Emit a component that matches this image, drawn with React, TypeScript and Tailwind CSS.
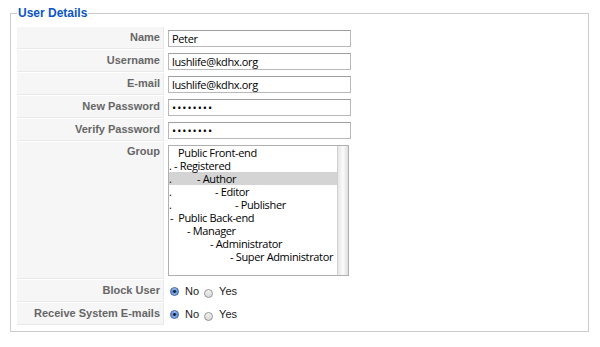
import React from 'react';

const groups = [
  { dot: 0, pad: 9, text: 'Public Front-end' },
  { dot: 5, pad: 0, text: '- Registered' },
  { dot: 28, pad: 0, text: '- Author', selected: true },
  { dot: 46, pad: 0, text: '- Editor' },
  { dot: 66, pad: 0, text: '- Publisher' },
  { dot: 0, pad: 1, text: '-  Public Back-end' },
  { dot: 0, pad: 18, text: '- Manager' },
  { dot: 0, pad: 41, text: '- Administrator' },
  { dot: 0, pad: 61, text: '- Super Administrator' },
];

function Radio({ checked }: { checked?: boolean }) {
  if (checked) {
    return (
      <svg width="9" height="9" viewBox="0 0 9 9" className="shrink-0">
        <defs>
          <linearGradient id="rb" x1="0" y1="0" x2="0" y2="1">
            <stop offset="0" stopColor="#a9c6ee" />
            <stop offset="0.5" stopColor="#5b8fd8" />
            <stop offset="1" stopColor="#8fb7ec" />
          </linearGradient>
        </defs>
        <circle cx="4.5" cy="4.5" r="4" fill="url(#rb)" stroke="#3f5f92" strokeWidth="0.9" />
        <circle cx="4.5" cy="4.5" r="1.4" fill="#111a2c" />
      </svg>
    );
  }
  return (
    <svg width="9" height="9" viewBox="0 0 9 9" className="shrink-0 translate-y-[2px]">
      <defs>
        <linearGradient id="rw" x1="0" y1="0" x2="0" y2="1">
          <stop offset="0" stopColor="#f4f4f4" />
          <stop offset="1" stopColor="#d6d6d6" />
        </linearGradient>
      </defs>
      <circle cx="4.5" cy="4.5" r="4" fill="url(#rw)" stroke="#8c8c8c" strokeWidth="0.9" />
    </svg>
  );
}

function Label({ children, top }: { children: React.ReactNode; top?: boolean }) {
  return (
    <div
      className={`bg-[#f6f6f6] border-b border-r border-[#e9e9e9] text-right pr-[3px] text-[11px] leading-[13px] font-bold text-[#666] flex justify-end ${
        top ? 'items-start pt-[3px]' : 'items-center'
      }`}
    >
      {children}
    </div>
  );
}

function TextField({ value, password }: { value: string; password?: boolean }) {
  return (
    <div className="w-[183px] h-[17px] border border-[#b8b8b8] border-t-[#9e9e9e] bg-white flex items-center pl-[3px] text-[11px] leading-[13px] text-black tracking-[-0.35px] font-['Open_Sans',sans-serif]">
      {password ? <span className="tracking-[1px]">{value}</span> : value}
    </div>
  );
}

function YesNo() {
  return (
    <div className="flex items-center pl-[2px] text-[11px] text-[#222] font-['Liberation_Sans',Arial,sans-serif]">
      <Radio checked />
      <span className="ml-[6px]">No</span>
      <span className="ml-[5px]">
        <Radio />
      </span>
      <span className="ml-[6px]">Yes</span>
    </div>
  );
}

export default function App() {
  return (
    <div className="w-[600px] h-[347px] bg-white overflow-hidden font-['Liberation_Sans',Arial,sans-serif]">
      <fieldset className="ml-[10px] mt-[6px] w-[579px] border border-[#cccccc] px-[6px] pt-[7px] pb-[6px]">
        <legend className="px-[1px] text-[12px] leading-[14px] font-bold text-[#0b55c4]">User Details</legend>

        <div className="grid grid-cols-[147px_1fr] gap-[1px]">
          <Label>Name</Label>
          <div className="h-[22px] pl-[3px] flex items-center">
            <TextField value="Peter" />
          </div>

          <Label>Username</Label>
          <div className="h-[22px] pl-[3px] flex items-center">
            <TextField value="lushlife@kdhx.org" />
          </div>

          <Label>E-mail</Label>
          <div className="h-[22px] pl-[3px] flex items-center">
            <TextField value="lushlife@kdhx.org" />
          </div>

          <Label>New Password</Label>
          <div className="h-[22px] pl-[3px] flex items-center">
            <TextField value="••••••••" password />
          </div>

          <Label>Verify Password</Label>
          <div className="h-[22px] pl-[3px] flex items-center">
            <TextField value="••••••••" password />
          </div>

          <Label top>Group</Label>
          <div className="h-[137px] pl-[3px] pt-[3px]">
            <div className="w-[181px] h-[131px] border border-[#b0b0b0] flex bg-white">
              <div className="flex-1 min-w-0 overflow-hidden text-[11px] leading-[13px] text-black tracking-[-0.35px] font-['Open_Sans',sans-serif]">
                {groups.map((g) => (
                  <div
                    key={g.text}
                    className={`h-[13px] flex whitespace-pre ${g.selected ? 'bg-[#d4d4d4]' : ''}`}
                  >
                    {g.dot > 0 ? (
                      <span style={{ width: g.dot }} className="shrink-0">.</span>
                    ) : (
                      <span style={{ width: g.pad }} className="shrink-0" />
                    )}
                    <span>{g.text}</span>
                  </div>
                ))}
              </div>
              <div className="w-[11px] shrink-0 border-l border-[#d0d0d0] bg-gradient-to-r from-[#e6e6e6] via-[#fbfbfb] to-[#dedede]" />
            </div>
          </div>

          <Label>Block User</Label>
          <div className="h-[22px] pl-[3px] flex items-center">
            <YesNo />
          </div>

          <Label>Receive System E-mails</Label>
          <div className="h-[22px] pl-[3px] flex items-center">
            <YesNo />
          </div>
        </div>
      </fieldset>
    </div>
  );
}
